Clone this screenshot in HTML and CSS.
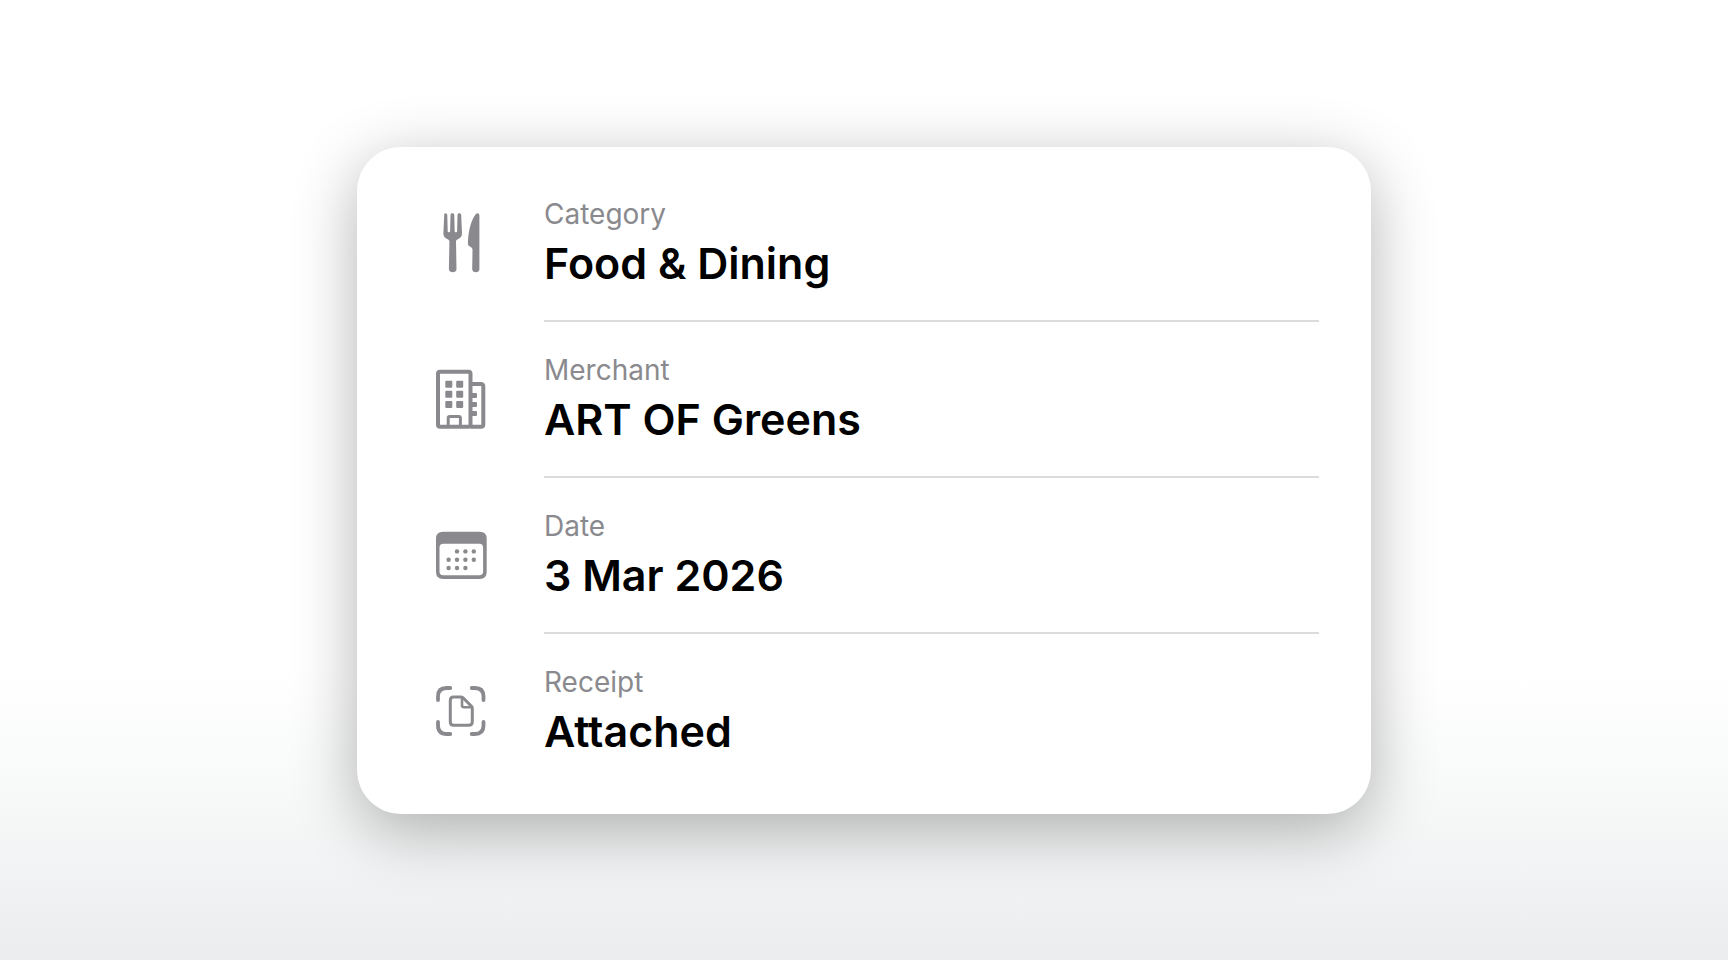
FILE: index.html
```html
<!DOCTYPE html>
<html lang="en">
<head>
  <meta charset="UTF-8">
  <meta name="viewport" content="width=device-width, initial-scale=1">
  <title>Expense details</title>
  <link rel="stylesheet" href="styles.css">
</head>
<body>
  <main class="card">

    <section class="row">
      <svg class="icon" viewBox="0 0 60 60" aria-hidden="true">
        <path fill="currentColor" d="M14.4.3c1.100 0 1.900.7 1.900 1.900l.4 16c0 1.400 2.400 1.400 2.400 0l.4-16c0-2.500 3.800-2.500 3.800 0l.4 16c0 1.400 2.400 1.400 2.400 0l.4-16c0-2.500 3.600-2.500 3.700 0l.8 18.300c.1 3-1.500 4.200-3.700 5.400-1.500.8-2.400 1.200-2.300 2.800l.5 27.300c0 4.400-7.600 4.400-7.600 0l.5-27.300c0-1.600-.8-2-2.300-2.800-2.200-1.200-3.800-2.400-3.700-5.400l.8-18.300C13.200 1 13.500.3 14.400.3z"/>
        <path fill="currentColor" d="M46.300.3c1.200 0 2.100.9 2.100 2.200V56c0 4.400-7.200 4.400-7.200 0l.3-18.500c0-1.700-.3-2.400-1.500-3.200l-1.800-1.200c-1-.7-1.400-1.500-1.300-3C37.300 19 39.500 8.500 44 2.200 44.700 1.100 45.400.3 46.300.3z"/>
      </svg>
      <div class="info">
        <p class="label">Category</p>
        <p class="value">Food &amp; Dining</p>
      </div>
    </section>

    <section class="row">
      <svg class="icon" viewBox="0 0 60 60" aria-hidden="true">
        <g fill="none" stroke="currentColor" stroke-width="4" stroke-linejoin="round">
          <rect x="7" y="2.700" width="32.500" height="55" rx="2"/>
          <path d="M39.500 15h10.300q2.500 0 2.500 2.500v37.700q0 2.500-2.500 2.500H39.500"/>
          <path stroke-width="3" d="M17.200 57V49q0-1.500 1.500-1.500h9.200q1.500 0 1.500 1.500v8"/>
        </g>
        <g fill="currentColor">
          <rect x="14.300" y="11.700" width="7" height="7" rx="1"/>
          <rect x="25.200" y="11.700" width="7" height="7" rx="1"/>
          <rect x="14.300" y="21.800" width="7" height="7" rx="1"/>
          <rect x="25.200" y="21.800" width="7" height="7" rx="1"/>
          <rect x="14.300" y="32" width="7" height="7" rx="1"/>
          <rect x="25.200" y="32" width="7" height="7" rx="1"/>
          <rect x="40" y="24" width="6" height="5" rx="1"/>
          <rect x="40" y="33" width="6" height="5" rx="1"/>
          <rect x="40" y="42" width="6" height="5" rx="1"/>
        </g>
      </svg>
      <div class="info">
        <p class="label">Merchant</p>
        <p class="value">ART OF Greens</p>
      </div>
    </section>

    <section class="row">
      <svg class="icon" viewBox="0 0 60 60" aria-hidden="true">
        <path fill="currentColor" fill-rule="evenodd" d="M12 6.700h36.700q7 0 7 7V47q0 7-7 7H12q-7 0-7-7V13.700q0-7 7-7zM12.300 18.700q-3.800 0-3.800 3.800v23.900q0 3.800 3.800 3.800h36q3.800 0 3.800-3.800V22.500q0-3.800-3.800-3.800z"/>
        <g fill="currentColor">
          <circle cx="26" cy="26.400" r="2.200"/>
          <circle cx="34.400" cy="26.400" r="2.200"/>
          <circle cx="42.800" cy="26.400" r="2.200"/>
          <circle cx="17.600" cy="34.700" r="2.200"/>
          <circle cx="26" cy="34.700" r="2.200"/>
          <circle cx="34.400" cy="34.700" r="2.200"/>
          <circle cx="42.800" cy="34.700" r="2.200"/>
          <circle cx="17.600" cy="43" r="2.200"/>
          <circle cx="26" cy="43" r="2.200"/>
          <circle cx="34.400" cy="43" r="2.200"/>
        </g>
      </svg>
      <div class="info">
        <p class="label">Date</p>
        <p class="value">3 Mar 2026</p>
      </div>
    </section>

    <section class="row">
      <svg class="icon" viewBox="0 0 60 60" aria-hidden="true">
        <g fill="none" stroke="currentColor" stroke-linecap="round" stroke-linejoin="round">
          <path stroke-width="3.800" d="M7 19v-3.500Q7 7 15.500 7H19.300M40.700 7h3.300q8.500 0 8.500 8.500V19M52.500 41v3.500q0 8.500-8.500 8.500h-3.300M19.300 53h-3.800Q7 53 7 44.500V41"/>
          <path stroke-width="3" d="M22.500 15.900h7.300q1.300 0 2.200.9l8.300 8.300q1 1 1 2.300v13.300q0 3.500-3.500 3.500H22.500q-3.200 0-3.200-3.500V19.400q0-3.500 3.200-3.500z"/>
          <path stroke-width="2.600" d="M31 16.500v7.800q0 2 2 2h7.600"/>
        </g>
      </svg>
      <div class="info">
        <p class="label">Receipt</p>
        <p class="value">Attached</p>
      </div>
    </section>

  </main>
</body>
</html>
```
FILE: styles.css
```css
* { box-sizing: border-box; }
body {
  margin: 0;
  min-height: 100vh;
  display: flex;
  align-items: center;
  justify-content: center;
  font-family: Inter, sans-serif;
  color: #000;
  background: linear-gradient(#fff 70%, #f7f9f8 83%, #f0f1f3 93%, #ecedef);
}
.card {
  width: 100%;
  max-width: 1014px;
  padding: 19px 52px 24px 74px;
  background: #fff;
  border-radius: 44px;
  box-shadow: 0 16px 64px rgba(0,0,0,0.3);
}
.row { display: flex; align-items: center; gap: 53px; }
.icon { width: 60px; height: 60px; margin-bottom: 2px; flex: none; color: #8a8a8e; }
.info { flex: 1; padding: 28px 0; border-bottom: 2px solid #dcdcde; }
.row:last-child .info { border-color: transparent; }
.label, .value { margin: 0; }
.label { font-size: 28px; line-height: 40px; color: #8a8a8e; }
.value { font-size: 43px; line-height: 58px; font-weight: 600; }
```
